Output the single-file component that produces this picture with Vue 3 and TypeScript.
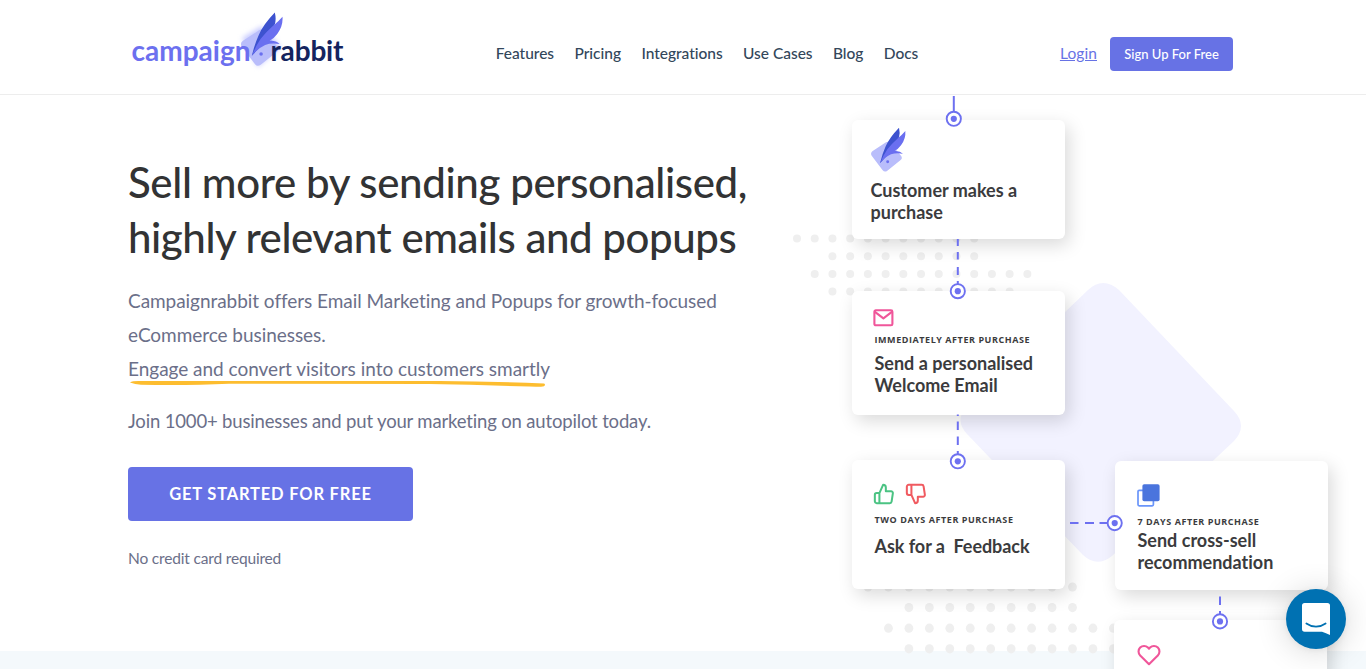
<script setup lang="ts">
interface Step {
  id: string
  label?: string
  title: string[]
}

const links: string[] = ['Features', 'Pricing', 'Integrations', 'Use Cases', 'Blog', 'Docs']

const steps: Step[] = [
  { id: 'purchase', title: ['Customer makes a', 'purchase'] },
  { id: 'welcome', label: 'IMMEDIATELY AFTER PURCHASE', title: ['Send a personalised', 'Welcome Email'] },
  { id: 'feedback', label: 'TWO DAYS AFTER PURCHASE', title: ['Ask for a  Feedback'] },
  { id: 'crosssell', label: '7 DAYS AFTER PURCHASE', title: ['Send cross-sell', 'recommendation'] },
  { id: 'loyal', title: [] },
]

interface Dot { x: number; y: number }

function grid(x0: number, y0: number, dx: number, dy: number, rows: [number, number][]): Dot[] {
  return rows.flatMap(([from, to], r) =>
    Array.from({ length: to - from + 1 }, (_, i) => ({ x: x0 + (from + i) * dx, y: y0 + r * dy })),
  )
}

const topDots = grid(797, 238.5, 17.72, 17.7, [[0, 10], [2, 10], [1, 13], [2, 12]])
const bottomDots = grid(868, 587, 20.45, 20.6, [[0, 10], [2, 10], [1, 12], [2, 12]])

const nodes: Dot[] = [
  { x: 953.8, y: 118.8 },
  { x: 957.8, y: 291.2 },
  { x: 957.8, y: 461.3 },
  { x: 1114.7, y: 523.1 },
  { x: 1220, y: 621.4 },
]
</script>

<template>
  <div class="page">
    <header class="header">
      <svg class="logo" width="220" height="76" viewBox="128 0 220 76">
        <defs>
          <filter id="glow" x="-40%" y="-40%" width="180%" height="180%"><feGaussianBlur stdDeviation="2.6" /></filter>
          <symbol id="rabbit" viewBox="270 110 110 138">
            <path d="M278 182 L318 156 Q325 151 331 158 L363 196 Q369 204 361 210 L322 241 Q314 247 308 240 L275 196 Q270 188 278 182Z" fill="#b9bdfb" />
            <path d="M357 112 Q361 128 357 141 Q344 174 300 219 Q307 190 317 168 Q328 142 357 112Z" fill="#3d52cf" />
            <path d="M376 122 Q378 145 363 165 Q354 177 344 182 Q360 181 369 190 Q349 186 333 192 Q313 201 300 219 Q308 198 322 177 Q334 161 352 145 Q366 134 376 122Z" fill="#6a6ff0" />
            <circle cx="323" cy="214.5" r="4.4" fill="#6a6ff0" />
          </symbol>
        </defs>
        <path d="M242 38 L262 26 L281 47 L258 67Z" fill="#c9ccff" filter="url(#glow)" />
        <use href="#rabbit" x="239.7" y="11.8" width="44.4" height="55.7" />
        <text x="131.5" y="60.8" class="brand brand-a" textLength="119">campaign</text>
        <text x="270.5" y="60.8" class="brand brand-b" textLength="73">rabbit</text>
      </svg>
      <nav class="nav">
        <a v-for="l in links" :key="l">{{ l }}</a>
      </nav>
      <div class="account">
        <a class="login">Login</a>
        <a class="signup">Sign Up For Free</a>
      </div>
    </header>

    <main class="hero">
      <h1><span class="h-a">Sell more by sending personalised,</span><br /><span class="h-b">highly relevant emails and popups</span></h1>
      <p class="lead">
        Campaignrabbit offers Email Marketing and Popups for growth-focused<br />eCommerce businesses.<br />
        <span class="marked">Engage and convert visitors into customers smartly
          <svg class="stroke" width="418" height="8" viewBox="0 0 418 8">
            <path d="M1 2.4 Q4 0.6 12 1 L310 1 Q365 1.6 415 3.4 Q417 4.5 415 6.2 Q412 7 400 6.6 Q350 4.8 300 4 L100 3.8 Q60 5.6 12 4.8 Q6 4 1 2.4Z" fill="#fdbd2f" />
          </svg>
        </span>
      </p>
      <p class="join">Join 1000+ businesses and put your marketing on autopilot today.</p>
      <a class="cta">GET STARTED FOR FREE</a>
      <p class="note">No credit card required</p>
    </main>
    <div class="band"></div>

    <div class="canvas">
      <svg class="layer" width="1366" height="669" viewBox="0 0 1366 669">
        <path d="M1088 290 Q1103 276 1119 290 L1234 411 Q1248 426 1234 441 L1112 556 Q1097 568 1083 555 L967 434 Q954 420 967 406Z" fill="#f2f2ff" />
        <g fill="#efefef">
          <circle v-for="(d, i) in topDots" :key="'t' + i" :cx="d.x" :cy="d.y" r="4" />
          <ellipse v-for="(d, i) in bottomDots" :key="'b' + i" :cx="d.x" :cy="d.y" rx="4.4" ry="4.6" />
        </g>
      </svg>

      <section v-for="s in steps" :key="s.id" class="card" :class="s.id">
        <div class="icons">
          <svg v-if="s.id === 'purchase'" width="36.7" height="46" viewBox="0 0 36.7 46"><use href="#rabbit" width="36.7" height="46" /></svg>
          <svg v-else-if="s.id === 'welcome'" width="21" height="18" viewBox="0 0 21 18" fill="none" stroke="#f0569a" stroke-width="2.1" stroke-linejoin="round">
            <rect x="1.4" y="1.3" width="18" height="15" rx="1.4" />
            <path d="M1.6 2.6 L10.4 9.4 L19.2 2.6" />
          </svg>
          <template v-else-if="s.id === 'feedback'">
            <svg width="22" height="22" viewBox="0 0 24 24" fill="none" stroke="#4bc383" stroke-width="2.2" stroke-linejoin="round">
              <path d="M14 9V5a3 3 0 0 0-3-3l-4 9v11h11.28a2 2 0 0 0 2-1.7l1.38-9a2 2 0 0 0-2-2.3zM7 22H4a2 2 0 0 1-2-2v-7a2 2 0 0 1 2-2h3" />
            </svg>
            <svg width="22" height="22" viewBox="0 0 24 24" fill="none" stroke="#f05a60" stroke-width="2.2" stroke-linejoin="round">
              <path transform="matrix(1 0 0 -1 0 24)" d="M14 9V5a3 3 0 0 0-3-3l-4 9v11h11.28a2 2 0 0 0 2-1.7l1.38-9a2 2 0 0 0-2-2.3zM7 22H4a2 2 0 0 1-2-2v-7a2 2 0 0 1 2-2h3" />
            </svg>
          </template>
          <svg v-else-if="s.id === 'crosssell'" width="23" height="23" viewBox="0 0 23 23">
            <rect x="1" y="6.4" width="15.4" height="15.4" rx="1.2" fill="#fff" stroke="#6a95fa" stroke-width="1.7" />
            <rect x="5.4" y="0.2" width="17.2" height="17" rx="1.8" fill="#4a74dd" />
          </svg>
          <svg v-else width="24" height="24" viewBox="0 0 24 24" fill="none" stroke="#f0569a" stroke-width="2.1" stroke-linejoin="round">
            <path d="M20.84 4.61a5.5 5.5 0 0 0-7.78 0L12 5.67l-1.06-1.06a5.5 5.5 0 0 0-7.78 7.78l1.06 1.06L12 21.23l7.78-7.78 1.06-1.06a5.5 5.5 0 0 0 0-7.78z" />
          </svg>
        </div>
        <div v-if="s.label" class="label">{{ s.label }}</div>
        <div class="title"><div v-for="t in s.title" :key="t">{{ t }}</div></div>
      </section>

      <svg class="layer" width="1366" height="669" viewBox="0 0 1366 669">
        <g stroke="#6d70f0" stroke-width="2" fill="none">
          <path d="M953.8 96V112" />
          <path d="M957.8 239V246M957.8 252V259.5M957.8 267V275M957.8 281V285" />
          <path d="M957.8 414.5V416M957.8 421.5V430M957.8 436.5V445M957.8 451V455" />
          <path d="M1070 523.1H1078.5M1085 523.1H1094M1099.5 523.1H1108" />
          <path d="M1220 596.5V605M1220 611V615" />
        </g>
        <g v-for="(n, i) in nodes" :key="i">
          <circle :cx="n.x" :cy="n.y" r="7.1" fill="#fff" stroke="#6d70f0" stroke-width="1.9" />
          <circle :cx="n.x" :cy="n.y" r="3.1" fill="#6d70f0" />
        </g>
      </svg>
    </div>

    <button class="chat" aria-label="Chat">
      <svg width="28" height="32" viewBox="0 0 28 32">
        <path d="M2.6 0H25.4Q28 0 28 2.6V32Q24 30 20 28.7H2.6Q0 28.7 0 26.1V2.6Q0 0 2.6 0Z" fill="#fff" />
        <path d="M4.4 20.4Q14 27 23.6 20.4" fill="none" stroke="#0071b2" stroke-width="1.8" stroke-linecap="round" />
      </svg>
    </button>
  </div>
</template>

<style>
body { margin: 0; overflow: hidden; }
</style>

<style scoped>
.page {
  position: relative;
  display: flex;
  flex-direction: column;
  height: 669px;
  overflow: hidden;
  background: #fff;
  font-family: "Lato", "Open Sans", sans-serif;
  font-kerning: normal;
  font-variant-ligatures: none;
}
.header {
  box-sizing: border-box;
  display: flex;
  align-items: flex-start;
  height: 95px;
  padding: 0 133px 0 128px;
  border-bottom: 1px solid #ededed;
}
.logo { flex: none; }
.brand { font-size: 28px; font-weight: 700; }
.brand-a { fill: #6c70ef; }
.brand-b { fill: #14245f; }
.nav {
  display: flex;
  gap: 20.4px;
  margin: 37px 0 0 147.7px;
  font-size: 15.5px;
  font-weight: 500;
  line-height: 33px;
  letter-spacing: -0.02px;
  color: #33475b;
}
.account { display: flex; gap: 13px; margin: 37px 0 0 auto; line-height: 33px; }
.login { font-size: 15.5px; letter-spacing: 0.1px; color: #6772e5; text-decoration: underline; }
.signup {
  width: 123px;
  height: 34px;
  border-radius: 4px;
  background: #6772e5;
  color: #fff;
  font-size: 13px;
  font-weight: 500;
  line-height: 34px;
  text-align: center;
}
.hero { flex: none; height: 556px; padding-left: 128px; box-sizing: border-box; color: #6b6f89; }
h1 {
  margin: 59.5px 0 0;
  font-size: 42px;
  font-weight: 500;
  line-height: 55px;
  color: #323334;
}
.h-a { letter-spacing: -0.37px; }
.h-b { letter-spacing: -0.44px; }
.lead { margin: 19px 0 0; font-size: 19px; line-height: 34px; letter-spacing: -0.05px; }
.marked { position: relative; letter-spacing: -0.02px; }
.stroke { position: absolute; left: 1px; top: 23px; }
.join { margin: 18px 0 0; font-size: 18.5px; line-height: 34px; letter-spacing: -0.16px; }
.cta {
  display: block;
  width: 285px;
  height: 54px;
  margin-top: 29.5px;
  border-radius: 4px;
  background: #6772e5;
  color: #fff;
  font-size: 16.5px;
  font-weight: 700;
  line-height: 55px;
  letter-spacing: 0.8px;
  text-align: center;
}
.note { margin: 25px 0 0; font-size: 15.5px; line-height: 24px; letter-spacing: -0.17px; }
.band { flex: 1; background: #f4f9fc; }
.canvas { position: absolute; inset: 0; pointer-events: none; }
.layer { position: absolute; left: 0; top: 0; }
.card {
  position: absolute;
  box-sizing: border-box;
  width: 213px;
  border-radius: 6px;
  background: #fff;
  box-shadow: 4px 6px 18px rgba(0, 0, 0, 0.15);
  color: #3b3b3d;
}
.purchase { left: 852px; top: 120px; height: 119px; padding: 7px 0 0 18.5px; }
.welcome { left: 852px; top: 291px; height: 123.5px; padding: 18px 0 0 22.5px; }
.feedback { left: 852px; top: 460px; height: 129px; padding: 22.5px 0 0 22.5px; }
.crosssell { left: 1115px; top: 461px; height: 129px; padding: 22.7px 0 0 22.5px; }
.loyal { left: 1114px; top: 620px; height: 129px; padding: 22.7px 0 0 22.5px; }
.icons { display: flex; gap: 10.5px; }
.icons svg { display: block; }
.purchase .icons { margin-left: -0.5px; }
.welcome .icons, .feedback .icons { margin-left: -2px; }
.crosssell .icons { margin-left: -0.5px; }
.label {
  font-family: "Open Sans", sans-serif;
  font-size: 9px;
  font-weight: 700;
  line-height: 12px;
  letter-spacing: 0.56px;
  white-space: nowrap;
}
.title { font-size: 18px; font-weight: 700; line-height: 22px; white-space: pre; }
.purchase .title { margin-top: 5.5px; }
.welcome .label { margin-top: 7px; }
.welcome .title { margin-top: 6px; }
.feedback .label { margin-top: 9.5px; }
.feedback .title { margin-top: 9px; letter-spacing: -0.05px; }
.crosssell .label { margin-top: 9px; }
.crosssell .title { margin-top: 1.5px; }
.chat {
  position: absolute;
  left: 1286px;
  top: 589px;
  display: flex;
  align-items: center;
  justify-content: center;
  width: 60px;
  height: 60px;
  padding: 0;
  border: 0;
  border-radius: 50%;
  background: #0071b2;
  box-shadow: 0 1px 6px rgba(0, 0, 0, 0.06), 0 2px 32px rgba(0, 0, 0, 0.16);
}
</style>
